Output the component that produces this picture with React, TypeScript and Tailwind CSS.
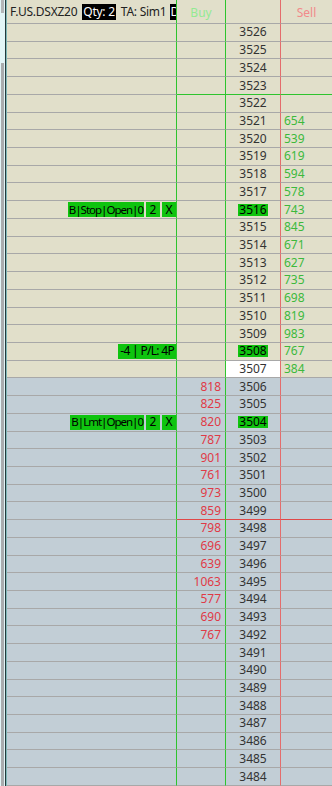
import React from "react";

const TOP = 3526;
const COUNT = 43;

const sells: Record<number, number> = {
  3521: 654, 3520: 539, 3519: 619, 3518: 594, 3517: 578, 3516: 743, 3515: 845,
  3514: 671, 3513: 627, 3512: 735, 3511: 698, 3510: 819, 3509: 983, 3508: 767, 3507: 384,
};

const buys: Record<number, number> = {
  3506: 818, 3505: 825, 3504: 820, 3503: 787, 3502: 901, 3501: 761, 3500: 973, 3499: 859,
  3498: 798, 3497: 696, 3496: 639, 3495: 1063, 3494: 577, 3493: 690, 3492: 767,
};

const highlighted = [3516, 3508, 3504];

function OrderBoxes({ label }: { label: string }) {
  return (
    <div className="flex h-full items-stretch justify-end gap-[2px] py-[1px]">
      <span className="flex items-center bg-[#0fc40f] px-[1px] text-[11.5px] tracking-[-1px] text-black">{label}</span>
      <span className="flex w-[14px] items-center justify-center bg-[#0fc40f] text-black">2</span>
      <span className="flex w-[14px] items-center justify-center bg-[#0fc40f] text-black">X</span>
    </div>
  );
}

function LeftCell({ price }: { price: number }) {
  if (price === 3516) return <OrderBoxes label="B|Stop|Open|0" />;
  if (price === 3504) return <OrderBoxes label="B|Lmt|Open|0" />;
  if (price === 3508)
    return (
      <div className="flex h-full items-stretch justify-end py-[1px]">
        <span className="flex items-center bg-[#0fc40f] px-[2px] tracking-[-0.7px] text-black">-4 | P/L: 4P</span>
      </div>
    );
  return null;
}

function Row({ price }: { price: number }) {
  const ask = price >= 3507;
  const bg = ask ? "bg-[#e1dfca]" : "bg-[#c2ced6]";
  let lineColor = "border-[#a8a8a8]";
  if (price === 3523) lineColor = "border-[#2ec42e]";
  if (price === 3499) lineColor = "border-[#e04848]";

  return (
    <div className={`grid h-[17.857px] grid-cols-[170px_49px_55px_1fr] ${bg}`}>
      <div className="border-b border-r border-b-[#a8a8a8] border-r-[#2ec42e] overflow-hidden">
        <LeftCell price={price} />
      </div>
      <div className={`flex items-center justify-end border-b border-r border-r-[#2ec42e] pr-[4px] text-[#e03a46] ${lineColor}`}>
        {buys[price] ?? ""}
      </div>
      <div
        className={`flex items-center justify-center border-b border-r border-r-[#e46c6c] text-[#333333] ${lineColor} ${
          price === 3507 ? "bg-white" : ""
        }`}
      >
        <span className={highlighted.includes(price) ? "bg-[#0fc40f] px-[1px] text-black" : ""}>{price}</span>
      </div>
      <div className={`flex items-center border-b pl-[3px] text-[#3cb93c] ${lineColor}`}>
        {sells[price] ?? ""}
      </div>
    </div>
  );
}

export default function App() {
  const prices = Array.from({ length: COUNT }, (_, i) => TOP - i);
  return (
    <div
      className="flex h-[786px] w-[332px] overflow-hidden bg-[#e1dfca] text-[12px] leading-none"
      style={{ fontFamily: '"Noto Sans", "Open Sans", sans-serif' }}
    >
      <div className="flex w-[7px] shrink-0 bg-[#e2f5f7]">
        <div className="ml-[1px] flex w-[3px] flex-col">
          <div className="h-[13px] bg-[#b4b7b9]" />
          <div className="mt-[50px] flex-1 bg-[#a9acae]" />
        </div>
        <div className="ml-auto w-[1px] bg-[#23393b]" />
        <div className="w-[1px] bg-[#7fb7b7]" />
      </div>
      <div className="flex min-w-0 flex-1 flex-col">
        <div className="grid h-[24px] shrink-0 grid-cols-[170px_49px_55px_1fr]">
          <div className="flex items-center overflow-hidden whitespace-nowrap border-b border-r border-b-[#a8a8a8] border-r-[#2ec42e] pl-[3px] tracking-[-0.25px] text-[#222]">
            <span>F.US.DSXZ20</span>
            <span className="ml-[5px] bg-black px-[1px] py-[2px] text-white">Qty: 2</span>
            <span className="ml-[5px]">TA: Sim1</span>
            <span className="ml-[4px] w-[7px] shrink-0 overflow-hidden bg-black py-[2px] text-white">D</span>
          </div>
          <div className="flex items-center justify-center border-b border-r border-b-[#a8a8a8] border-r-[#2ec42e] pt-[3px] text-[#93ea93]">
            Buy
          </div>
          <div className="border-b border-r border-b-[#a8a8a8] border-r-[#e46c6c]" />
          <div className="flex items-center justify-center border-b border-b-[#a8a8a8] pt-[3px] text-[#f28a8a]">
            Sell
          </div>
        </div>
        {prices.map((p) => (
          <Row key={p} price={p} />
        ))}
      </div>
    </div>
  );
}
